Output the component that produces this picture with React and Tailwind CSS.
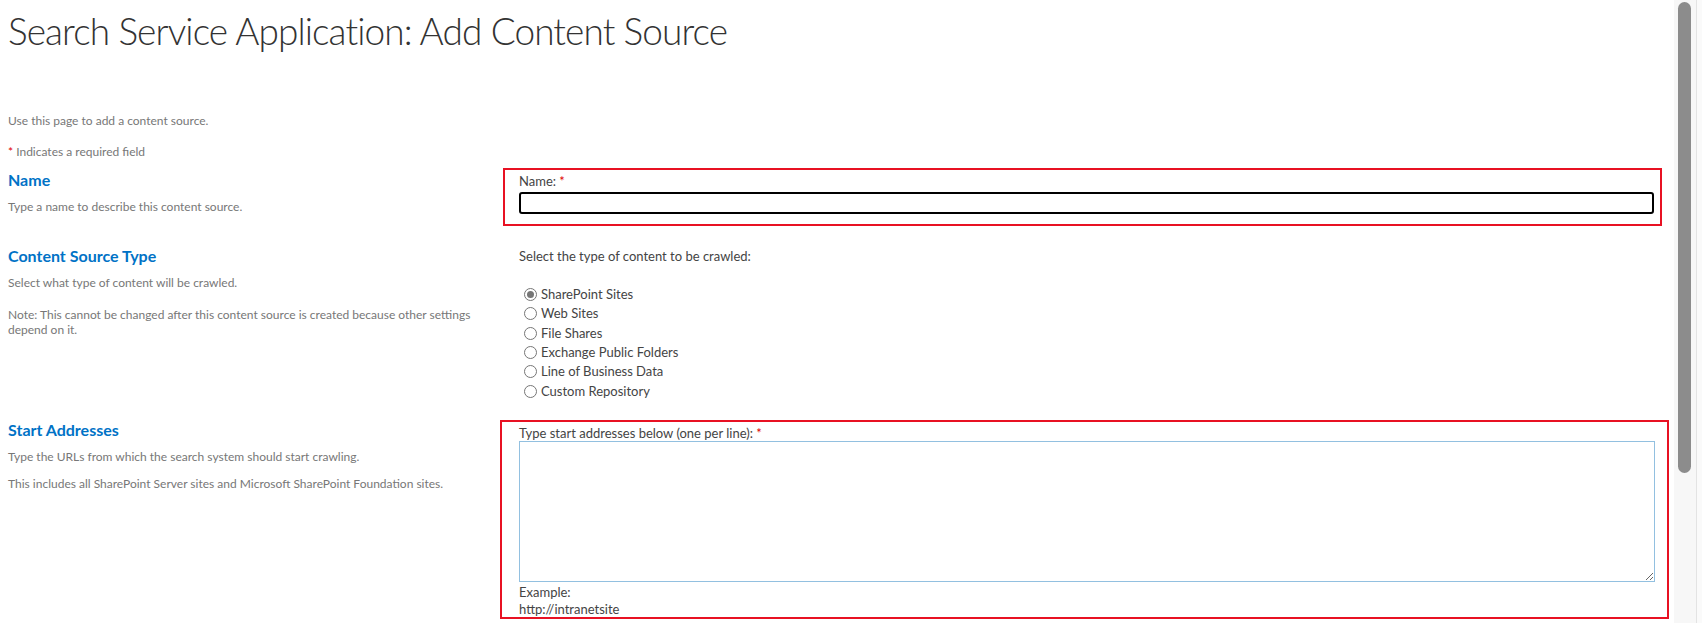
import React from 'react'

const ff = { fontFamily: '"Segoe UI", Lato, "Liberation Sans", sans-serif' }

const types = [
  'SharePoint Sites',
  'Web Sites',
  'File Shares',
  'Exchange Public Folders',
  'Line of Business Data',
  'Custom Repository',
]

const Radio = ({ checked, label }) => (
  <label className="flex h-[19.3px] items-center">
    <span className="ml-[5px] mr-[4px] flex h-[13px] w-[13px] items-center justify-center rounded-full border border-[#767676] bg-white">
      {checked && <span className="h-[7px] w-[7px] rounded-full bg-[#767676]" />}
    </span>
    <span>{label}</span>
  </label>
)

const Star = () => <span className="text-[#e00000]"> *</span>

export default function App() {
  return (
    <div className="flex h-screen w-full overflow-hidden bg-white text-[#444]" style={ff}>
      <main className="flex-1 pl-2">
        <h1 className="mt-[5px] text-[37px] font-light leading-[52px] tracking-[-0.9px] text-[#333]">
          Search Service Application: Add Content Source
        </h1>

        <p className="mt-[56px] text-[12px] leading-[15px] text-[#777]">Use this page to add a content source.</p>
        <p className="mt-[16px] text-[12px] leading-[15px] text-[#777]">
          <span className="text-[#e00000]">*</span> Indicates a required field
        </p>

        {/* Name */}
        <div className="mt-[9px] flex">
          <div className="w-[492px] pt-[2px]">
            <h2 className="text-[16px] font-bold leading-[20px] text-[#0072c6]">Name</h2>
            <p className="mt-[9px] text-[12px] leading-[15px] text-[#777]">Type a name to describe this content source.</p>
          </div>
          <div className="flex-1 pr-[5px]">
            <div className="ml-[3px] mr-[7px] border-2 border-[#e81123] pb-[10px] pl-[14px] pr-[6px] pt-[3px]">
              <div className="text-[13px] leading-[17px]">
                Name:<Star />
              </div>
              <input className="mt-[2px] block h-[22px] w-full rounded-[3px] border-2 border-black outline-none" />
            </div>
          </div>
        </div>

        {/* Content Source Type */}
        <div className="mt-[20px] flex">
          <div className="w-[492px]">
            <h2 className="text-[16px] font-bold leading-[20px] text-[#0072c6]">Content Source Type</h2>
            <p className="mt-[9px] text-[12px] leading-[15px] text-[#777]">Select what type of content will be crawled.</p>
            <p className="mt-[17px] w-[470px] text-[12px] leading-[15px] text-[#777]">
              Note: This cannot be changed after this content source is created because other settings depend on it.
            </p>
          </div>
          <div className="flex-1 pl-[19px] pt-[2px] text-[13px] leading-[17px]">
            <div>Select the type of content to be crawled:</div>
            <div className="mt-[20px]">
              {types.map((t, i) => (
                <Radio key={t} label={t} checked={i === 0} />
              ))}
            </div>
          </div>
        </div>

        {/* Start Addresses */}
        <div className="mt-[19px] flex">
          <div className="w-[492px]">
            <h2 className="text-[16px] font-bold leading-[20px] text-[#0072c6]">Start Addresses</h2>
            <p className="mt-[9px] text-[12px] leading-[15px] text-[#777]">
              Type the URLs from which the search system should start crawling.
            </p>
            <p className="mt-[12px] text-[12px] leading-[15px] text-[#777]">
              This includes all SharePoint Server sites and Microsoft SharePoint Foundation sites.
            </p>
          </div>
          <div className="flex-1 pr-[5px]">
            <div className="h-[199px] border-2 border-[#e81123] pl-[17px] pr-[12px] pt-[3px] text-[13px] leading-[17px]">
              <div>
                Type start addresses below (one per line):<Star />
              </div>
              <textarea className="-mt-px block h-[141px] w-full resize border border-[#92c0e0] outline-none" />
              <div className="mt-[2px]">Example:</div>
              <div>http://intranetsite</div>
            </div>
          </div>
        </div>
      </main>

      {/* scrollbar */}
      <div className="flex w-[28px]">
        <div className="w-[22px] bg-[#f7f7f7] pl-[4px] pt-[2px]">
          <div className="h-[471px] w-[13px] rounded-full bg-[#8c8c8c]" />
        </div>
        <div className="w-px bg-[#e3e3e3]" />
        <div className="flex-1 bg-[#fafafa]" />
      </div>
    </div>
  )
}
